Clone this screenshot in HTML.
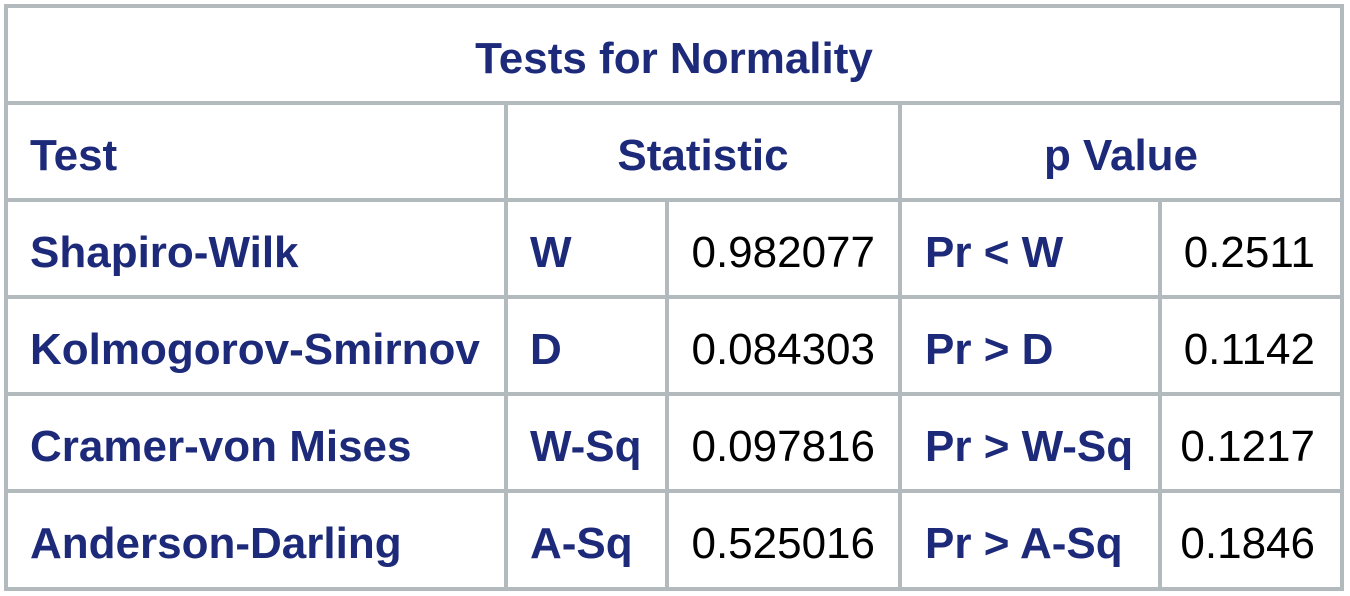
<!DOCTYPE html>
<html><head><meta charset="utf-8"><style>
body{margin:0;width:1350px;height:596px;background:#fff;position:relative;overflow:hidden;font-family:"Liberation Sans",Arial,sans-serif;font-size:44px;}
.h,.v{position:absolute;background:#b3babd;}
.h{height:4px}
.v{width:4px}
.t{position:absolute;color:#1d2a7a;font-weight:bold;height:97px;line-height:101px;white-space:nowrap}
.n{position:absolute;color:#000;height:97px;line-height:101px;text-align:right;white-space:nowrap}
</style></head><body>
<div class="h" style="left:4px;width:1340px;top:4px"></div>
<div class="h" style="left:4px;width:1340px;top:101px"></div>
<div class="h" style="left:4px;width:1340px;top:198px"></div>
<div class="h" style="left:4px;width:1340px;top:295px"></div>
<div class="h" style="left:4px;width:1340px;top:392px"></div>
<div class="h" style="left:4px;width:1340px;top:489px"></div>
<div class="h" style="left:4px;width:1340px;top:587px"></div>
<div class="v" style="left:4px;top:4px;height:587px"></div>
<div class="v" style="left:1340px;top:4px;height:587px"></div>
<div class="v" style="left:504px;top:101px;height:490px"></div>
<div class="v" style="left:898px;top:101px;height:490px"></div>
<div class="v" style="left:665px;top:198px;height:393px"></div>
<div class="v" style="left:1158px;top:198px;height:393px"></div>

<div class="t" style="left:8px;width:1332px;top:8px;text-align:center">Tests for Normality</div>
<div class="t" style="left:30px;top:105px">Test</div>
<div class="t" style="left:508px;width:390px;top:105px;text-align:center">Statistic</div>
<div class="t" style="left:902px;width:438px;top:105px;text-align:center">p Value</div>

<div class="t" style="left:30px;top:202px">Shapiro-Wilk</div>
<div class="t" style="left:530px;top:202px">W</div>
<div class="n" style="left:669px;width:206px;top:202px">0.982077</div>
<div class="t" style="left:925px;top:202px">Pr &lt; W</div>
<div class="n" style="left:1162px;width:153px;top:202px">0.2511</div>

<div class="t" style="left:30px;top:299px">Kolmogorov-Smirnov</div>
<div class="t" style="left:530px;top:299px">D</div>
<div class="n" style="left:669px;width:206px;top:299px">0.084303</div>
<div class="t" style="left:925px;top:299px">Pr &gt; D</div>
<div class="n" style="left:1162px;width:153px;top:299px">0.1142</div>

<div class="t" style="left:30px;top:396px">Cramer-von Mises</div>
<div class="t" style="left:530px;top:396px">W-Sq</div>
<div class="n" style="left:669px;width:206px;top:396px">0.097816</div>
<div class="t" style="left:925px;top:396px">Pr &gt; W-Sq</div>
<div class="n" style="left:1162px;width:153px;top:396px">0.1217</div>

<div class="t" style="left:30px;top:493px">Anderson-Darling</div>
<div class="t" style="left:530px;top:493px">A-Sq</div>
<div class="n" style="left:669px;width:206px;top:493px">0.525016</div>
<div class="t" style="left:925px;top:493px">Pr &gt; A-Sq</div>
<div class="n" style="left:1162px;width:153px;top:493px">0.1846</div>
</body></html>
